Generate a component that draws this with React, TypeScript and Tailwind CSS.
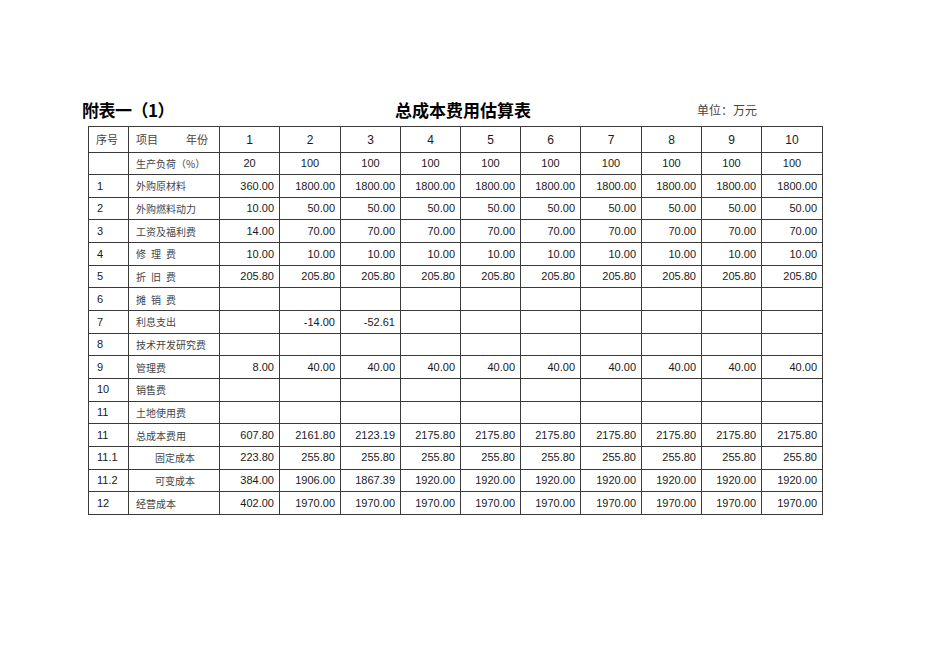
import React from 'react';

type Row = {
  no: string;
  name: string;
  indent?: boolean;
  values: string[];
};

const blank = ['', '', '', '', '', '', '', '', '', ''];
const same = (first: string, second: string, rest: string) => [first, second, ...Array(8).fill(rest)];

const rows: Row[] = [
  { no: '1', name: '外购原材料', values: same('360.00', '1800.00', '1800.00') },
  { no: '2', name: '外购燃料动力', values: same('10.00', '50.00', '50.00') },
  { no: '3', name: '工资及福利费', values: same('14.00', '70.00', '70.00') },
  { no: '4', name: '修\u2002理\u2002费', values: same('10.00', '10.00', '10.00') },
  { no: '5', name: '折\u2002旧\u2002费', values: same('205.80', '205.80', '205.80') },
  { no: '6', name: '摊\u2002销\u2002费', values: blank },
  { no: '7', name: '利息支出', values: ['', '-14.00', '-52.61', '', '', '', '', '', '', ''] },
  { no: '8', name: '技术开发研究费', values: blank },
  { no: '9', name: '管理费', values: same('8.00', '40.00', '40.00') },
  { no: '10', name: '销售费', values: blank },
  { no: '11', name: '土地使用费', values: blank },
  {
    no: '11',
    name: '总成本费用',
    values: ['607.80', '2161.80', '2123.19', '2175.80', '2175.80', '2175.80', '2175.80', '2175.80', '2175.80', '2175.80'],
  },
  { no: '11.1', name: '固定成本', indent: true, values: same('223.80', '255.80', '255.80') },
  {
    no: '11.2',
    name: '可变成本',
    indent: true,
    values: ['384.00', '1906.00', '1867.39', '1920.00', '1920.00', '1920.00', '1920.00', '1920.00', '1920.00', '1920.00'],
  },
  { no: '12', name: '经营成本', values: same('402.00', '1970.00', '1970.00') },
];

const years = ['1', '2', '3', '4', '5', '6', '7', '8', '9', '10'];
const colWidths = [40, 91, 60, 61, 60, 60, 60, 60, 61, 60, 60, 61];

const cell = 'border border-[#3a3a3a] p-0';
const cjk = "font-['Noto_Sans_CJK_SC',sans-serif]";

export default function App() {
  return (
    <div
      className="w-[950px] h-[672px] bg-white text-black"
      style={{ fontFamily: '"Liberation Sans", Arial, "Noto Sans CJK SC", sans-serif' }}
    >
      {/* 标题行 */}
      <div className="flex items-center pl-[82px] pt-[99px] h-[121px] leading-[22px]">
        <span className={`w-[313px] text-[17px] font-bold ${cjk} tracking-[-0.5px]`}>附表一（1）</span>
        <span className={`w-[302px] text-[17px] font-bold ${cjk}`}>总成本费用估算表</span>
        <span className={`text-[12px] text-[#444] ${cjk}`}>单位：万元</span>
      </div>

      <table className="mt-[5px] ml-[88px] w-[734px] table-fixed border-collapse text-[11px] text-[#1a1a1a]">
        <colgroup>
          {colWidths.map((w, i) => (
            <col key={i} style={{ width: w }} />
          ))}
        </colgroup>
        <tbody>
          <tr className="h-[26px]">
            <td className={`${cell} pl-[7px] text-[#444] ${cjk}`}>序号</td>
            <td className={`${cell} pl-[7px] text-[#444] ${cjk}`}>
              <div className="flex justify-between pr-[11px]">
                <span>项目</span>
                <span>年份</span>
              </div>
            </td>
            {years.map((y) => (
              <td key={y} className={`${cell} text-center text-[12px]`}>
                {y}
              </td>
            ))}
          </tr>
          <tr className="h-[22px]">
            <td className={cell}></td>
            <td className={`${cell} pl-[7px] text-[10px] text-[#444] ${cjk}`}>生产负荷（%）</td>
            {['20', '100', '100', '100', '100', '100', '100', '100', '100', '100'].map((v, i) => (
              <td key={i} className={`${cell} text-center`}>
                {v}
              </td>
            ))}
          </tr>
          {rows.map((r, ri) => (
            <tr key={ri} className="h-[22.67px]">
              <td className={`${cell} pl-[8px]`}>{r.no}</td>
              <td
                className={`${cell} ${r.indent ? 'pl-[26px]' : 'pl-[7px]'} text-[10px] text-[#444] ${cjk} whitespace-pre`}
              >
                {r.name}
              </td>
              {r.values.map((v, i) => (
                <td key={i} className={`${cell} text-right pr-[5px]`}>
                  {v}
                </td>
              ))}
            </tr>
          ))}
        </tbody>
      </table>
    </div>
  );
}
